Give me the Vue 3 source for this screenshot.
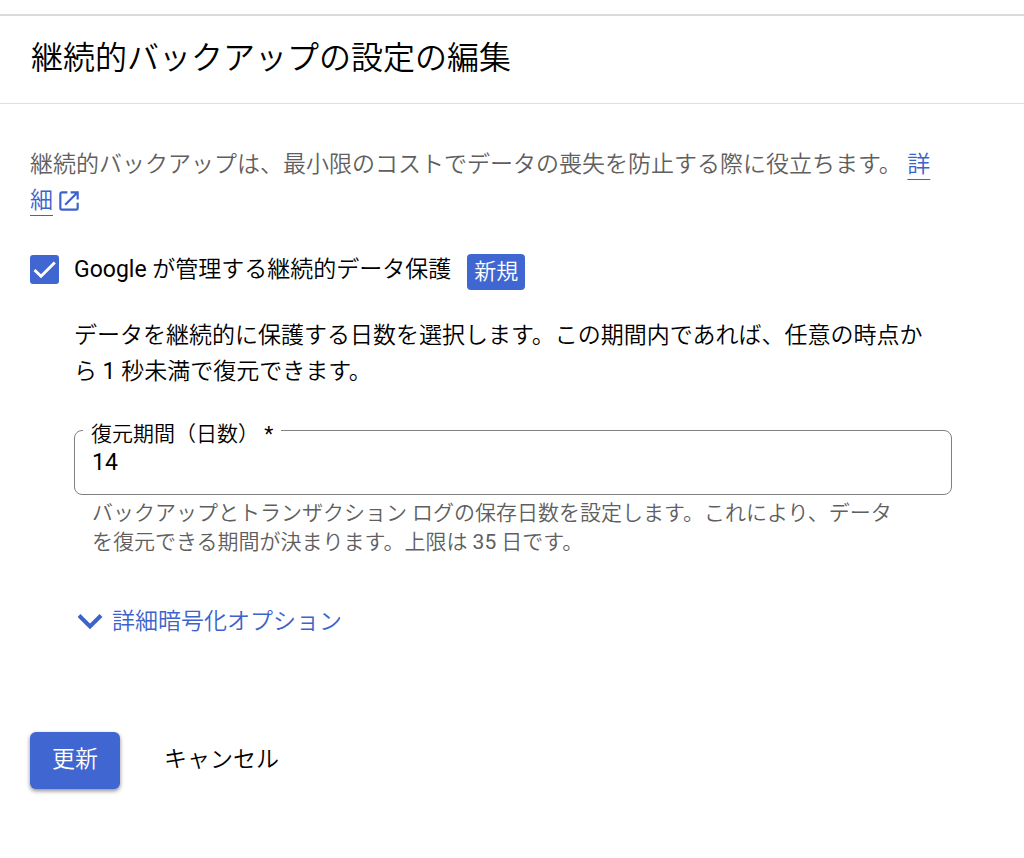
<script setup>
import { ref } from "vue";

const managedProtection = ref(true);
const retentionDays = ref("14");
</script>

<template>
  <main class="panel">
    <header class="panel-header">
      <h1>継続的バックアップの設定の編集</h1>
    </header>

    <form class="content" @submit.prevent>
      <p class="intro">
        継続的バックアップは、最小限のコストでデータの喪失を防止する際に役立ちます。
        <a href="#" class="link"><span class="link-text">詳細</span><svg class="external" viewBox="0 0 24 24" aria-hidden="true">
          <path d="M10.5 4h-5A1.5 1.5 0 0 0 4 5.5v13A1.5 1.5 0 0 0 5.5 20h13a1.5 1.5 0 0 0 1.5-1.5v-5" />
          <path d="M13.5 4H20v6.5M20 4L8.5 15.5" />
        </svg></a>
      </p>

      <div class="option">
        <input id="protection" v-model="managedProtection" type="checkbox" class="checkbox" />
        <label for="protection"><span class="latin">Google</span> が管理する継続的データ保護</label>
        <span class="badge">新規</span>
      </div>

      <section class="details">
        <p class="description">
          データを継続的に保護する日数を選択します。この期間内であれば、任意の時点から <span class="latin">1</span> 秒未満で復元できます。
        </p>

        <fieldset class="field">
          <legend><label for="days">復元期間（日数） <span class="latin">*</span></label></legend>
          <input id="days" v-model="retentionDays" type="text" class="latin" required />
        </fieldset>
        <p class="hint">
          バックアップとトランザクション ログの保存日数を設定します。これにより、データを復元できる期間が決まります。上限は <span class="latin">35</span> 日です。
        </p>

        <button type="button" class="expander">
          <svg class="chevron" viewBox="0 0 28 28" aria-hidden="true">
            <path d="M3 7.500l11 11L25 7.500" />
          </svg>
          詳細暗号化オプション
        </button>
      </section>

      <div class="actions">
        <button type="submit" class="primary">更新</button>
        <button type="button" class="cancel">キャンセル</button>
      </div>
    </form>
  </main>
</template>

<style>
body {
  margin: 0;
  background: #fff;
}
</style>

<style scoped>
.panel {
  margin-top: 14px;
  border-top: 2px solid #dadada;
  color: #000;
  font-family: Roboto, "Noto Sans CJK JP", sans-serif;
  font-size: 23px;
  font-weight: 350;
  line-height: 36px;
}

.panel-header {
  padding: 18px 31px 21px;
  border-bottom: 1px solid #e0e0e0;
}

h1 {
  margin: 0;
  font-size: 32px;
  font-weight: 350;
  line-height: 48px;
}

p {
  margin: 0;
}

button,
input {
  font: inherit;
}

button {
  border: none;
  background: none;
  cursor: pointer;
}

.latin {
  font-weight: 400;
}

.content {
  padding: 43px 72px 32px 30px;
}

.intro {
  color: #5f5f5f;
}

.link {
  color: #3b63cb;
  text-decoration: none;
}

.link-text {
  text-decoration: underline;
  text-decoration-thickness: 1px;
  text-underline-offset: 7px;
  text-decoration-skip-ink: none;
}

.external {
  width: 26px;
  height: 26px;
  margin-left: 3px;
  vertical-align: -6px;
  fill: none;
  stroke: currentColor;
  stroke-width: 2;
}

.option {
  display: flex;
  align-items: flex-start;
  margin-top: 33px;
}

.checkbox {
  appearance: none;
  width: 29px;
  height: 29px;
  margin: 3px 15px 0 0;
  border-radius: 3px;
  background: #4066d1;
}

.checkbox:checked::before {
  content: "";
  display: block;
  width: 29px;
  height: 29px;
  background: #fff;
  clip-path: polygon(12% 55%, 19% 48%, 38% 66%, 82% 22%, 89% 29%, 38% 80%);
}

.badge {
  margin: 2px 0 0 16px;
  padding: 0 7px;
  border-radius: 4px;
  background: #4066d1;
  color: #fff;
  font-size: 22px;
}

.details {
  margin: 28px 0 0 44px;
}

.description {
  padding-right: 8px;
}

.field {
  min-width: 0;
  margin: 24px 0 0;
  padding: 0 8px 14px;
  border: 1px solid #808080;
  border-radius: 8px;
}

.field legend {
  padding: 8px 8px 0;
  font-size: 21px;
  line-height: 24px;
}

.field input {
  display: block;
  box-sizing: border-box;
  width: 100%;
  height: 34px;
  padding: 0 9px;
  border: none;
  outline: none;
  background: none;
}

.hint {
  padding: 4px 40px 0 18px;
  color: #5f5f5f;
  font-size: 21px;
  line-height: 29px;
}

.expander {
  display: flex;
  align-items: center;
  gap: 8px;
  margin-top: 47px;
  padding: 0 2px;
  color: #3b63cb;
}

.chevron {
  width: 28px;
  height: 28px;
  fill: none;
  stroke: currentColor;
  stroke-width: 4;
}

.actions {
  display: flex;
  align-items: center;
  gap: 22px;
  margin-top: 92px;
}

.primary,
.cancel {
  padding: 10px 22px 11px;
}

.primary {
  border-radius: 6px;
  background: #4066d1;
  box-shadow: 0 2px 4px rgba(0, 0, 0, 0.45);
  color: #fff;
}
</style>
